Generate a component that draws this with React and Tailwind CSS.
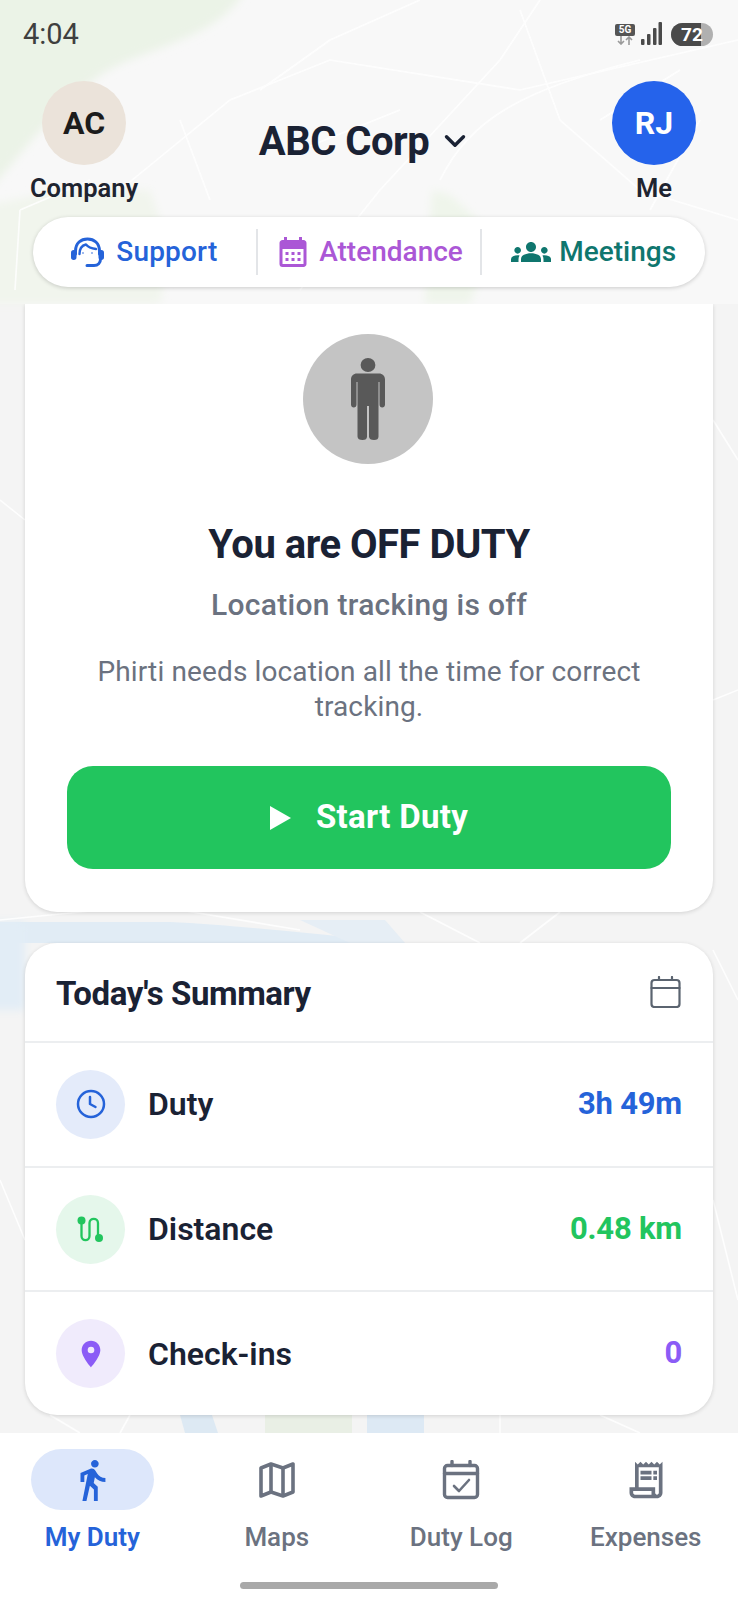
import { ChevronDown } from 'lucide-react';
import {
  MdCalendarMonth,
  MdDirectionsWalk,
  MdGroups,
  MdLocationOn,
  MdOutlineReceiptLong,
} from 'react-icons/md';

function MapBackground() {
  return (
    <svg className="absolute inset-0 w-full h-full" viewBox="0 0 738 1600" fill="none">
      <defs>
        <filter id="soft" x="-20%" y="-20%" width="140%" height="140%">
          <feGaussianBlur stdDeviation="4" />
        </filter>
      </defs>
      <rect width="738" height="1600" fill="#f4f4f4" />
      <rect width="738" height="304" fill="#f8f8f8" />
      {/* parks */}
      <g filter="url(#soft)">
        <path d="M-10 -10H245C225 30 165 45 125 62C80 80 40 130 -10 190Z" fill="#ebf3e7" />
        <path d="M-10 205L60 190H150L170 250L160 304H-10Z" fill="#f1f5ed" />
        <path d="M432 190L450 195L495 235L470 304H425Z" fill="#eff5eb" />
      </g>
      <path d="M265 1415H352V1433H265Z" fill="#e9efe5" />
      {/* water */}
      <path d="M0 922H170C230 925 300 932 405 943H0Z" fill="#e1ecf5" />
      <path d="M300 920H385L405 943H350Z" fill="#e6eef5" />
      <path d="M-10 922H25V1010H-10Z" fill="#e2edf6" filter="url(#soft)" />
      <path d="M180 1415H212L218 1433H185Z" fill="#dde9f3" />
      <path d="M367 1415H424V1433H367Z" fill="#dde9f4" />
      {/* roads */}
      <g stroke="#ffffff" strokeWidth="1.6" opacity="0.85">
        <path d="M260 90L330 40L420 0" />
        <path d="M120 190L230 100L330 60L520 90L738 40" />
        <path d="M300 290L380 190L500 60L540 0" />
        <path d="M440 180C470 120 520 90 640 60" />
        <path d="M20 210L15 290M20 210L90 180" />
        <path d="M520 10L560 120L640 190L738 220" />
        <path d="M180 120L210 200M600 120L680 70M650 210L700 120M300 150L400 110" />
        <path d="M0 500L25 520M713 420L738 460M713 700L738 690" />
        <path d="M0 920L150 905L300 930M420 912L480 943M560 912L520 943" />
        <path d="M713 950L738 1000M713 1200L738 1300M0 1180L25 1240" />
        <path d="M50 1415L80 1433M130 1415L120 1433M500 1415V1433M600 1415L640 1433" />
      </g>
    </svg>
  );
}

function StatusBar() {
  return (
    <div className="h-[68px] flex items-center justify-between pl-[23px] pr-[25px]">
      <span className="mt-[1px] text-[29px] text-[#3f3f3f]">4:04</span>
      <div className="flex items-center">
        <div className="flex flex-col items-center w-[20px] mr-[6px]">
          <span className="w-[20px] h-[12px] rounded-[2px] bg-[#555555] text-white text-[10px] font-bold leading-[12px] text-center">5G</span>
          <svg width="18" height="9" viewBox="0 0 18 9" fill="none" stroke="#9a9a9a" strokeWidth="1.6">
            <path d="M5 0V8M2 5L5 8L8 5M13 9V1M10 4L13 1L16 4" />
          </svg>
        </div>
        <svg width="21" height="24" viewBox="0 0 21 24" fill="#4a4a4a" className="mr-[9px]">
          <rect x="0" y="17" width="3.5" height="6" rx="1" />
          <rect x="6" y="12" width="3.5" height="11" rx="1" />
          <rect x="12" y="6" width="3.5" height="17" rx="1" />
          <rect x="17.5" y="0" width="3.5" height="23" rx="1" />
        </svg>
        <div className="w-[42px] h-[23px] rounded-full bg-[#b0b0b0] overflow-hidden relative flex items-center justify-center">
          <div className="absolute inset-y-0 left-0 w-[30px] bg-[#4a4a4a]" />
          <span className="relative text-white text-[19px] font-bold leading-none">72</span>
        </div>
      </div>
    </div>
  );
}

function HeaderAvatar({ initials, label, className }) {
  return (
    <div className="w-[108px] flex flex-col items-center">
      <div className={`w-[84px] h-[84px] rounded-full flex items-center justify-center text-[32px] font-bold ${className}`}>
        {initials}
      </div>
      <span className="mt-[7px] text-[25.5px] leading-[32px] font-semibold text-[#1f2430]">{label}</span>
    </div>
  );
}

function SupportIcon() {
  return (
    <svg width="33" height="31" viewBox="0 0 33 31" fill="none" stroke="#2563d9" strokeWidth="3" strokeLinecap="round" strokeLinejoin="round">
      <path d="M4.5 17V14C4.5 6 10 2 16.5 2C23 2 28.5 6 28.5 14V17" />
      <rect x="1.5" y="14.5" width="2.5" height="7" rx="1.2" fill="#2563d9" />
      <rect x="29" y="14.5" width="2.5" height="7" rx="1.2" fill="#2563d9" />
      <path d="M29.5 22C29.5 26 27 28.5 23 28.5H16" />
      <path d="M8.5 17C8.5 11 11 8.5 15 7.5C17 10 21 11.5 25 12" strokeWidth="2.4" />
      <circle cx="12" cy="16" r="0.8" fill="#2563d9" stroke="none" />
      <circle cx="21" cy="16" r="0.8" fill="#2563d9" stroke="none" />
    </svg>
  );
}

function QuickLinks() {
  const itemClass = 'flex-1 flex items-center justify-center text-[28px] font-medium';
  return (
    <div className="mx-[33px] mt-[12px] h-[70px] rounded-full bg-white shadow-[0_1px_4px_rgba(0,0,0,0.18)] flex items-center">
      <div className={`${itemClass} text-[#2563d9] gap-[12px]`}>
        <SupportIcon />
        <span className="tracking-[0.2px]">Support</span>
      </div>
      <div className="w-[2px] h-[46px] bg-[#e3e5e8]" />
      <div className={`${itemClass} text-[#ab57d6] gap-[8px]`}>
        <MdCalendarMonth size={36} />
        <span>Attendance</span>
      </div>
      <div className="w-[2px] h-[46px] bg-[#e3e5e8]" />
      <div className={`${itemClass} text-[#0f766e] gap-[8px]`}>
        <MdGroups size={40} />
        <span>Meetings</span>
      </div>
    </div>
  );
}

function StandingFigure() {
  return (
    <svg width="34" height="82" viewBox="0 0 34 82" fill="#595959">
      <ellipse cx="17" cy="7" rx="7.4" ry="7" />
      <path d="M6 15.5H28C31.5 15.5 34 18 34 21.5V46.5C34 48.5 32.8 49.5 31.2 49.5C29.6 49.5 28.5 48.5 28.5 46.5V24H27.5V78.5C27.5 81 26 82 23 82C20 82 18 81 18 78.5V48H16V78.5C16 81 14.5 82 11.5 82C8.5 82 6.5 81 6.5 78.5V24H5.5V46.5C5.5 48.5 4.4 49.5 2.8 49.5C1.2 49.5 0 48.5 0 46.5V21.5C0 18 2.5 15.5 6 15.5Z" />
    </svg>
  );
}

function DutyCard() {
  return (
    <div className="h-[608px] bg-white rounded-b-[32px] shadow-[0_1px_4px_rgba(0,0,0,0.14)] px-[42px] pt-[30px] flex flex-col items-center text-center">
      <div className="w-[130px] h-[130px] -ml-[2px] rounded-full bg-[#c4c4c4] flex items-center justify-center">
        <StandingFigure />
      </div>
      <h1 className="mt-[59px] text-[40px] leading-[44px] font-bold text-[#1a2234] tracking-[-0.5px]">You are OFF DUTY</h1>
      <p className="mt-[21px] text-[30px] leading-[34px] font-medium text-[#6b7280] tracking-[0.3px]">Location tracking is off</p>
      <p className="mt-[32px] text-[28px] leading-[35px] text-[#6b7280] tracking-[0.13px]">Phirti needs location all the time for correct tracking.</p>
      <button className="mt-[42px] w-full h-[103px] shrink-0 rounded-[26px] bg-[#22c55e] text-white flex items-center justify-center gap-[25px] text-[33px] font-bold tracking-[0.3px]">
        <svg width="21" height="24" viewBox="0 0 21 24" fill="white">
          <path d="M0 0L21 12L0 24Z" />
        </svg>
        <span className="mb-[2px]">Start Duty</span>
      </button>
    </div>
  );
}

function DistanceIcon() {
  return (
    <svg width="27" height="27" viewBox="0 0 27 27" fill="none" stroke="#22c55e" strokeWidth="2.3" strokeLinecap="round">
      <path d="M4.5 6V20C4.5 25.5 12.5 25.5 12.5 20V7C12.5 1.5 21 1.5 21 7V22" />
      <circle cx="4.5" cy="4.5" r="4" fill="#22c55e" stroke="none" />
      <circle cx="22" cy="22" r="4" fill="#22c55e" stroke="none" />
    </svg>
  );
}

function ClockIcon() {
  return (
    <svg width="30" height="30" viewBox="0 0 30 30" fill="none" stroke="#2563d9" strokeWidth="2.5" strokeLinecap="round" strokeLinejoin="round">
      <circle cx="15" cy="15" r="13" />
      <path d="M14 8V15L19.5 18" />
    </svg>
  );
}

function CalendarIcon() {
  return (
    <svg width="31" height="32" viewBox="0 0 31 32" fill="none" stroke="#5b6470" strokeWidth="2.2" strokeLinecap="round" strokeLinejoin="round">
      <rect x="1.5" y="4" width="28" height="27" rx="3" />
      <path d="M1.5 12H29.5M9 1V4M22 1V4" />
    </svg>
  );
}

const SUMMARY_ROWS = [
  { label: 'Duty', value: '3h 49m', icon: <ClockIcon />, circle: 'bg-[#e4ebfa]', color: 'text-[#2563d9]' },
  { label: 'Distance', value: '0.48 km', icon: <DistanceIcon />, circle: 'bg-[#e5f7eb]', color: 'text-[#22c55e]' },
  { label: 'Check-ins', value: '0', icon: <MdLocationOn size={32} />, circle: 'bg-[#f0ebfc] text-[#8b5cf6]', color: 'text-[#8b5cf6]' },
];

function SummaryCard() {
  return (
    <div className="mt-[31px] h-[472px] bg-white rounded-[32px] shadow-[0_1px_4px_rgba(0,0,0,0.14)] flex flex-col">
      <div className="h-[100px] shrink-0 pl-[31px] pr-[32px] flex items-center justify-between border-b-2 border-[#eceef0]">
        <h2 className="mt-[3px] text-[33px] font-bold text-[#1a2234] tracking-[-0.4px]">Today's Summary</h2>
        <CalendarIcon />
      </div>
      {SUMMARY_ROWS.map((row, i) => (
        <div key={row.label} className={`flex-1 px-[31px] flex items-center ${i < 2 ? 'border-b-2 border-[#eceef0]' : ''}`}>
          <div className={`w-[69px] h-[69px] rounded-full flex items-center justify-center ${row.circle}`}>
            {row.icon}
          </div>
          <span className="ml-[23px] text-[32px] font-semibold text-[#1a2234]">{row.label}</span>
          <span className={`ml-auto text-[31px] font-bold tracking-[-0.2px] ${row.color}`}>{row.value}</span>
        </div>
      ))}
    </div>
  );
}

function MapIcon() {
  return (
    <svg width="36" height="36" viewBox="0 0 36 36" fill="none" stroke="#6b7280" strokeWidth="3.6" strokeLinejoin="round">
      <path d="M2 6L12 2L24 6L34 2V30L24 34L12 30L2 34Z" />
      <path d="M12 2V30M24 6V34" />
    </svg>
  );
}

function DutyLogIcon() {
  return (
    <svg width="38" height="40" viewBox="0 0 38 40" fill="none" stroke="#6b7280" strokeWidth="3.4" strokeLinecap="round" strokeLinejoin="round">
      <rect x="2.5" y="5.5" width="33" height="32" rx="3" />
      <path d="M2.5 13.5H35.5M10 1.5V5.5M28 1.5V5.5" />
      <path d="M12 26L17 31L27 20" strokeWidth="2.6" />
    </svg>
  );
}

function BottomNav() {
  const labelClass = 'mt-[10px] text-[26px] leading-[34px] font-medium';
  return (
    <div className="relative h-[167px] bg-white">
      <div className="grid grid-cols-4 pt-[16px]">
        <div className="flex flex-col items-center">
          <div className="w-[123px] h-[61px] rounded-full bg-[#dde7fb] flex items-center justify-center text-[#2563d9]">
            <MdDirectionsWalk size={46} />
          </div>
          <span className={`${labelClass} font-semibold text-[#2563d9]`}>My Duty</span>
        </div>
        <div className="flex flex-col items-center">
          <div className="h-[61px] flex items-center"><MapIcon /></div>
          <span className={`${labelClass} text-[#6b7280]`}>Maps</span>
        </div>
        <div className="flex flex-col items-center">
          <div className="h-[61px] flex items-center"><DutyLogIcon /></div>
          <span className={`${labelClass} text-[#6b7280]`}>Duty Log</span>
        </div>
        <div className="flex flex-col items-center">
          <div className="h-[61px] flex items-center"><MdOutlineReceiptLong size={44} className="text-[#6b7280]" /></div>
          <span className={`${labelClass} text-[#6b7280]`}>Expenses</span>
        </div>
      </div>
      <div className="mx-auto mt-[28px] w-[258px] h-[7px] rounded-full bg-[#a9a9a9]" />
    </div>
  );
}

export default function App() {
  return (
    <div className="relative w-[738px] h-[1600px] overflow-hidden font-['Roboto',sans-serif]">
      <MapBackground />
      <div className="relative h-full flex flex-col">
        <StatusBar />
        <div className="mt-[13px] px-[30px] flex justify-between h-[124px]">
          <HeaderAvatar initials="AC" label="Company" className="bg-[#ebe3da] text-[#1c1c1c]" />
          <div className="pt-[38px] pr-[7px] flex items-start gap-[9px] text-[40px] leading-[46px] font-bold text-[#1a2234] tracking-[-0.5px]">
            <span>ABC Corp</span>
            <ChevronDown size={34} strokeWidth={2.4} className="mt-[5px]" />
          </div>
          <HeaderAvatar initials="RJ" label="Me" className="bg-[#2563eb] text-white" />
        </div>
        <QuickLinks />
        <div className="flex-1 px-[25px] mt-[17px] overflow-hidden">
          <DutyCard />
          <SummaryCard />
        </div>
        <BottomNav />
      </div>
    </div>
  );
}
